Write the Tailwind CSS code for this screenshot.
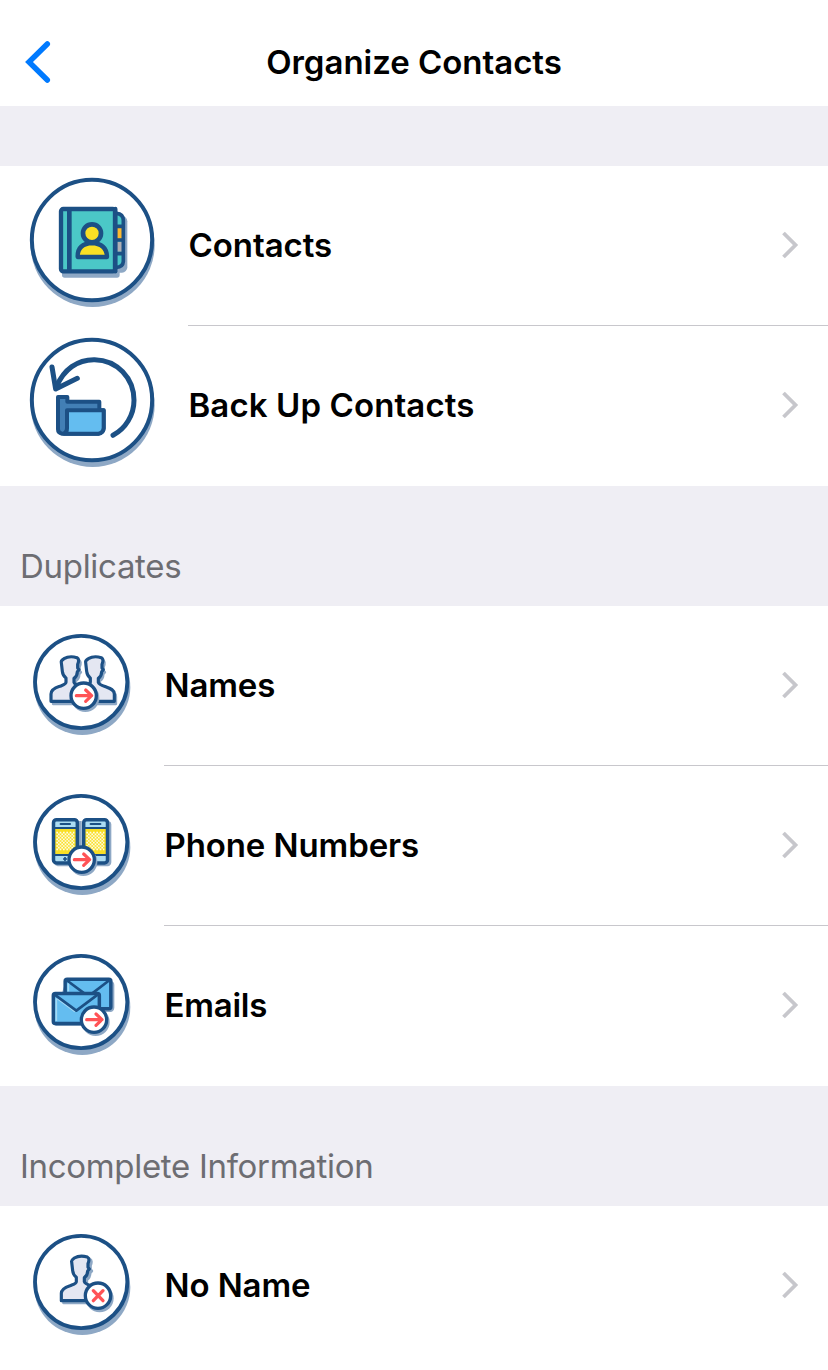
<!DOCTYPE html>
<html lang="en">
<head>
<meta charset="utf-8">
<title>Organize Contacts</title>
<script src="https://cdn.jsdelivr.net/npm/@tailwindcss/browser@4"></script>
</head>
<body class="bg-white">
<svg class="hidden">
  <defs>
    <symbol id="ring" viewBox="0 0 345 345">
      <circle cx="172" cy="186" r="144" fill="#8ea8c5"/>
      <circle cx="168.500" cy="171" r="138.500" fill="#fff" stroke="#1c5085" stroke-width="11.500"/>
    </symbol>
    <symbol id="bigring" viewBox="0 0 435 435">
      <circle cx="218" cy="225" r="186" fill="#8ea8c5"/>
      <circle cx="216" cy="210" r="180.500" fill="#fff" stroke="#1c5085" stroke-width="12"/>
    </symbol>
    <path id="bust" d="M78 229V207C78 193 92 188 104 184C114 180 123 178 123 172V159C116 154 113 148 112 139L109 113C107 107 113 104 117 101C127 95 143 94 156 98C163 102 161 111 158 118V129L162 134L157 140C157 150 153 156 147 160V172C149 179 160 182 171 186C182 190 195 194 195 207V229Z" stroke-linejoin="round"/>
    <symbol id="arrowbadge" viewBox="-50 -50 100 100">
      <circle cx="5" cy="7" r="42" fill="#8ea8c5"/>
      <circle r="38" fill="#fff" stroke="#1c5085" stroke-width="10"/>
      <path d="M-22 0H23M6 -17L24 0L6 17" fill="none" stroke="#ff5356" stroke-width="9.500" stroke-linecap="round" stroke-linejoin="round"/>
    </symbol>
    <symbol id="chev" viewBox="0 0 18 28"><path d="M2.500 2L14.500 14L2.500 26" fill="none" stroke="#c7c7cc" stroke-width="3.800"/></symbol>
  </defs>
</svg>
<main class="flex h-[1370px] w-[828px] flex-col overflow-hidden bg-[#efeef4] font-['Inter','Liberation_Sans',sans-serif] text-[33px] font-semibold text-black">
  <header class="grid h-[106px] shrink-0 grid-cols-[100px_1fr_100px] items-center bg-white pt-[18px]">
    <svg class="ml-[23px] h-[46px] w-[30px]" viewBox="0 0 30 46"><path d="M24.300 5L6 23L24.300 41" fill="none" stroke="#007aff" stroke-width="5.500" stroke-linecap="round" stroke-linejoin="miter"/></svg>
    <h1 class="pt-0.5 text-center whitespace-nowrap"><span class="tracking-[-0.03px]">Organize Contacts</span></h1>
  </header>

  <section class="mt-[60px] shrink-0 bg-white">
    <div class="flex h-40">
      <svg class="mt-1 ml-5 size-[145px] shrink-0" viewBox="0 0 435 435">
        <use href="#bigring" width="435" height="435"/>
        <rect x="126" y="290" width="173" height="33" rx="8" fill="#8ea8c5"/>
        <rect x="280" y="138" width="42" height="170" rx="16" fill="#8ea8c5"/>
        <path d="M286 130H294Q310 134 310 149V276Q308 291 292 292H286Z" fill="#4bc8c7"/>
        <path d="M291 173h15v33h-15z" fill="#fcb92f"/>
        <path d="M291 216h15v29h-15z" fill="#b0b0b4"/>
        <path d="M289 130Q310 132 310 151V274Q309 291 289 292M290 169H310M290 210H310M290 251H310" fill="none" stroke="#1c5085" stroke-width="11"/>
        <rect x="123" y="117" width="162" height="187" rx="7" fill="#4bc8c7" stroke="#1c5085" stroke-width="13"/>
        <path d="M148 117V304" stroke="#1c5085" stroke-width="14"/>
        <path d="M286 117V304" stroke="#1c5085" stroke-width="13" stroke-linecap="round"/>
        <path d="M173 261Q172 221 216 219Q260 221 261 261Z" fill="#f9df25" stroke="#1c5085" stroke-width="13" stroke-linejoin="round"/>
        <circle cx="216" cy="190" r="27" fill="#f9df25" stroke="#1c5085" stroke-width="14"/>
      </svg>
      <div class="ml-[23px] flex flex-1 items-center border-b border-[#c8c7cc] pb-px pl-[0.5px]"><span class="flex-1 pt-0.5 tracking-[-0.05px]">Contacts</span><svg class="mr-[29px] h-[28px] w-[18px]"><use href="#chev"/></svg></div>
    </div>
    <div class="flex h-40">
      <svg class="mt-1 ml-5 size-[145px] shrink-0" viewBox="0 0 435 435">
        <use href="#bigring" width="435" height="435"/>
        <path d="M110 169C131 119 172 88 224 89C291 90 342 144 342 211C342 255 317 296 279 316" fill="none" stroke="#1c5085" stroke-width="15" stroke-linecap="round"/>
        <path d="M96 111L107 177L172 145" fill="none" stroke="#1c5085" stroke-width="15" stroke-linecap="round" stroke-linejoin="round"/>
        <path d="M114 201H142V215H238V241H251V296Q250 309 235 311H126Q114 309 114 298Z" fill="#427fb5" stroke="#1c5085" stroke-width="12" stroke-linejoin="round"/>
        <path d="M141 241H251V294Q250 309 235 311H132Q141 307 141 295Z" fill="#64bdf0" stroke="#1c5085" stroke-width="12" stroke-linejoin="round"/>
      </svg>
      <div class="ml-[23px] flex flex-1 items-center pb-0.5 pl-[0.5px]"><span class="flex-1 pt-0.5 tracking-[0.1px]">Back Up Contacts</span><svg class="mr-[29px] h-[28px] w-[18px]"><use href="#chev"/></svg></div>
    </div>
  </section>

  <h2 class="flex h-[120px] shrink-0 items-end pb-[15px] pl-5 font-normal text-[#6d6d72]"><span class="tracking-[-0.3px]">Duplicates</span></h2>

  <section class="shrink-0 bg-white">
    <div class="flex h-40">
      <svg class="mt-[19px] ml-[25px] size-[115px] shrink-0" viewBox="0 0 345 345">
        <use href="#ring" width="345" height="345"/>
        <use href="#bust" x="6" y="8" fill="#8ea8c5" stroke="#8ea8c5" stroke-width="7"/>
        <use href="#bust" x="78" y="8" fill="#8ea8c5" stroke="#8ea8c5" stroke-width="7"/>
        <use href="#bust" x="73" fill="#e4e7f2" stroke="#1c5085" stroke-width="9.500"/>
        <use href="#bust" fill="#e4e7f2" stroke="#1c5085" stroke-width="9.500"/>
        <use href="#arrowbadge" x="126" y="162" width="100" height="100"/>
      </svg>
      <div class="ml-[24px] flex flex-1 items-center border-b border-[#c8c7cc] pb-px pl-[0.5px]"><span class="flex-1 pt-0.5 tracking-[-0.15px]">Names</span><svg class="mr-[29px] h-[28px] w-[18px]"><use href="#chev"/></svg></div>
    </div>
    <div class="flex h-40">
      <svg class="mt-[19px] ml-[25px] size-[115px] shrink-0" viewBox="0 0 345 345">
        <use href="#ring" width="345" height="345"/>
        <path d="M90 108H170V236Q169 243 160 244H98Q89 243 87 235ZM178 108H252Q259 110 259 118V232Q258 243 248 244H184Z" fill="#8ea8c5"/>
        <rect x="85.500" y="103.500" width="72" height="130" rx="9" fill="#acdcf2"/>
        <rect x="175.500" y="103.500" width="72" height="130" rx="9" fill="#acdcf2"/>
        <path d="M87 130h70v80H87zM177 130h70v80h-70z" fill="#f9df25"/>
        <g fill="none" stroke="#fffce8" stroke-width="5">
          <path stroke-dasharray="5 5" d="M94 143H148M94 153H148M94 163H148M94 173H148M94 183H148M94 193H148M184 143H238M184 153H238M184 163H238M184 173H238M184 183H238M184 193H238"/>
          <path stroke-dasharray="5 5" d="M99 148H148M99 158H148M99 168H148M99 178H148M99 188H148M189 148H238M189 158H238M189 168H238M189 178H238M189 188H238"/>
        </g>
        <path d="M86 129H158M86 210H158M176 129H248M176 210H248M107 117H135M197 117H226" stroke="#1c5085" stroke-width="6.500" stroke-linecap="round"/>
        <path d="M114 222h12M120 216v12" stroke="#1c5085" stroke-width="5"/>
        <rect x="85.500" y="104" width="71.500" height="130" rx="9" fill="none" stroke="#1c5085" stroke-width="10.500"/>
        <rect x="176" y="104" width="71.500" height="130" rx="9" fill="none" stroke="#1c5085" stroke-width="10.500"/>
        <use href="#arrowbadge" x="120" y="174" width="100" height="100"/>
      </svg>
      <div class="ml-[24px] flex flex-1 items-center border-b border-[#c8c7cc] pb-px pl-[0.5px]"><span class="flex-1 pt-0.5 tracking-[-0.1px]">Phone Numbers</span><svg class="mr-[29px] h-[28px] w-[18px]"><use href="#chev"/></svg></div>
    </div>
    <div class="flex h-40">
      <svg class="mt-[19px] ml-[25px] size-[115px] shrink-0" viewBox="0 0 345 345">
        <use href="#ring" width="345" height="345"/>
        <path d="M122 108H258Q268 110 268 120V188Q267 200 256 201H230V243H94Q85 242 84 232Z" fill="#8ea8c5"/>
        <g fill="#64bdf0" stroke="#1c5085" stroke-width="10.500" stroke-linejoin="round">
          <rect x="120.500" y="102.500" width="137" height="89" rx="6"/>
          <path d="M124 105L190 154L254 105" fill="none" stroke-width="8"/>
          <path d="M130 115V140" stroke="#a5daf5" stroke-width="5"/>
          <rect x="85" y="145.500" width="138" height="90" rx="6"/>
          <path d="M94 160V228" stroke="#a5daf5" stroke-width="5"/>
          <path d="M97 161L150 200" stroke="#a5daf5" stroke-width="5"/>
          <path d="M88 148L154 197L219 148" fill="none" stroke-width="8"/>
        </g>
        <use href="#arrowbadge" x="157" y="174" width="100" height="100"/>
      </svg>
      <div class="ml-[24px] flex flex-1 items-center pb-0.5 pl-[0.5px]"><span class="flex-1 pt-0.5 tracking-[-0.25px]">Emails</span><svg class="mr-[29px] h-[28px] w-[18px]"><use href="#chev"/></svg></div>
    </div>
  </section>

  <h2 class="flex h-[120px] shrink-0 items-end pb-[15px] pl-5 font-normal text-[#6d6d72]"><span class="tracking-[-0.31px]">Incomplete Information</span></h2>

  <section class="h-[164px] shrink-0 bg-white">
    <div class="flex h-40">
      <svg class="mt-[19px] ml-[25px] size-[115px] shrink-0" viewBox="0 0 345 345">
        <use href="#ring" width="345" height="345"/>
        <use href="#bust" x="38" y="4" fill="#8ea8c5" stroke="#8ea8c5" stroke-width="9"/>
        <use href="#bust" x="31" y="-2" fill="#e4e7f2" stroke="#1c5085" stroke-width="9.500"/>
        <circle cx="224" cy="220" r="42" fill="#8ea8c5"/>
        <circle cx="219" cy="212" r="38" fill="#fff" stroke="#1c5085" stroke-width="10"/>
        <path d="M205 197L234 227M234 197L205 227" stroke="#ff5356" stroke-width="10" stroke-linecap="round"/>
      </svg>
      <div class="ml-[24px] flex flex-1 items-center pb-0.5 pl-[0.5px]"><span class="flex-1 pt-0.5 tracking-[-0.1px]">No Name</span><svg class="mr-[29px] h-[28px] w-[18px]"><use href="#chev"/></svg></div>
    </div>
  </section>
</main>
</body>
</html>
